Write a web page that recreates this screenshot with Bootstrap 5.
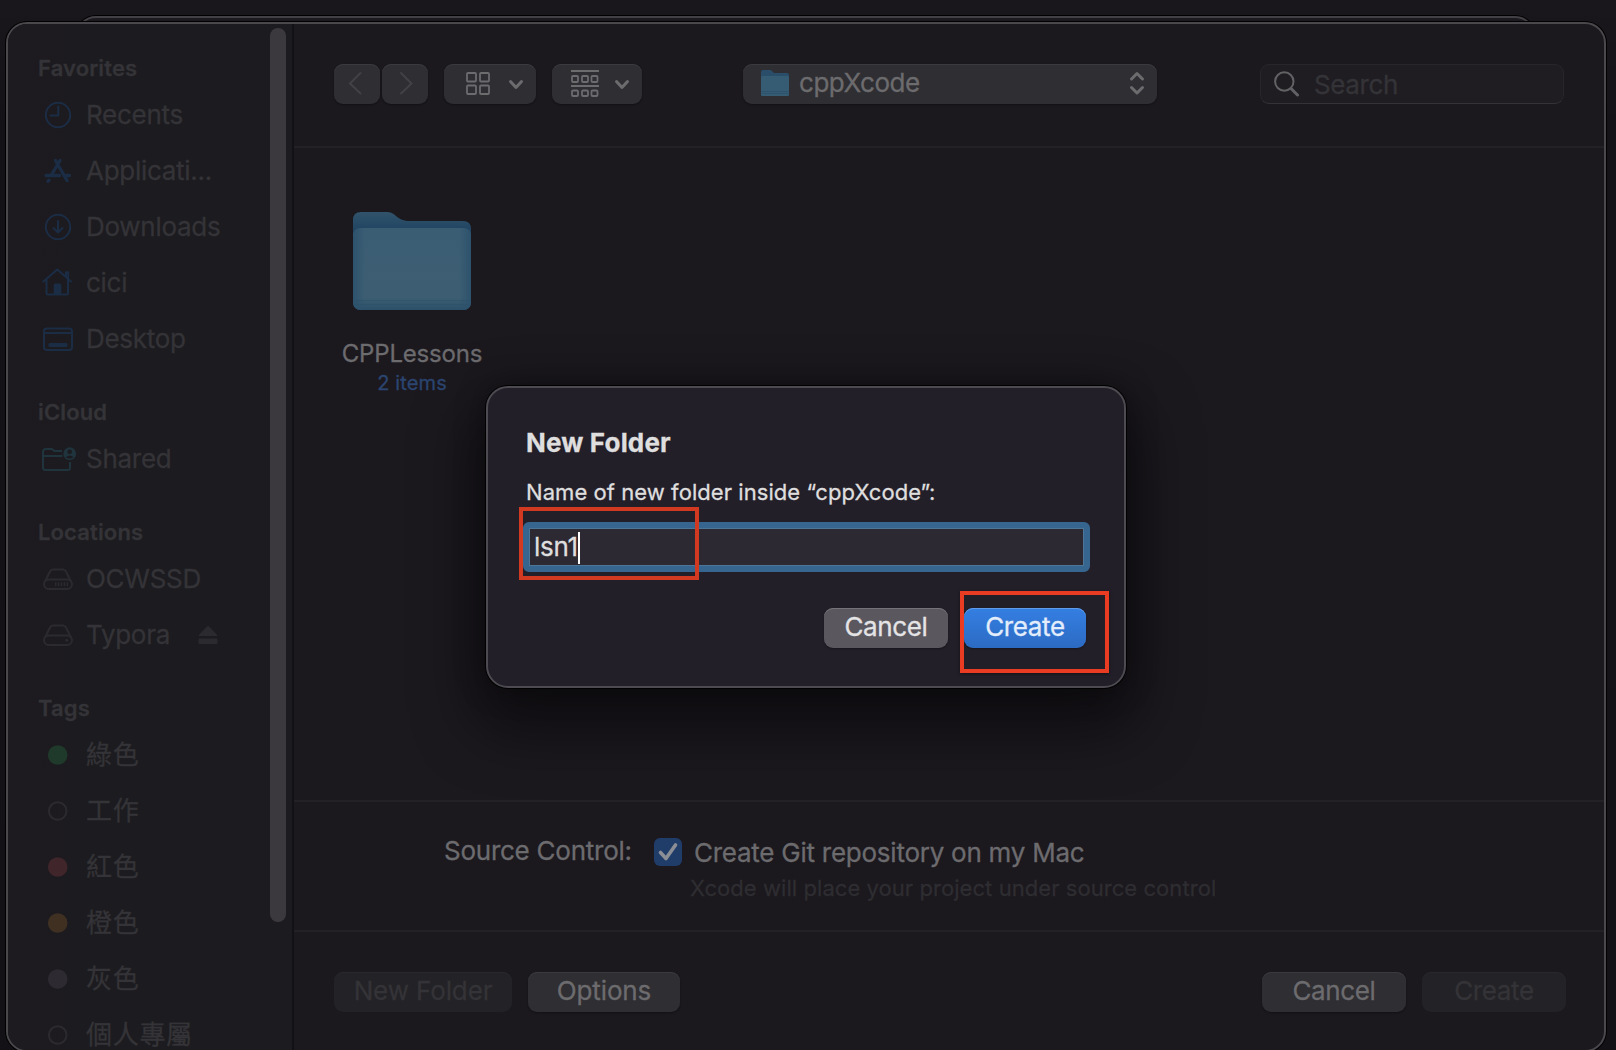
<!DOCTYPE html>
<html lang="en">
<head>
<meta charset="utf-8">
<meta name="viewport" content="width=device-width, initial-scale=1">
<title>New Folder</title>
<link href="https://cdn.jsdelivr.net/npm/bootstrap@5.3.0/dist/css/bootstrap.min.css" rel="stylesheet">
<style>
body{margin:0;width:1616px;height:1050px;overflow:hidden;background:linear-gradient(180deg,#19171c 0,#141217 120px,#131116 100%);font-family:Inter,"Noto Sans CJK TC",sans-serif;font-size:26px;line-height:30px;color:#6c6b6e;-webkit-text-stroke:.3px currentColor;letter-spacing:-.25px}
svg{display:block;flex:none}
.desk{width:1616px;height:1050px;overflow:hidden}
.backwin{left:76px;top:16px;width:1459px;height:60px;border:2px solid #424045;border-radius:20px;background:#1b191e;box-shadow:0 0 0 1px #000}
.win{left:6px;top:22px;width:1600px;height:1030px;border:2px solid #4a484c;border-radius:21px;background:#1b181e;box-shadow:0 0 0 1px #000}
.side{width:284px;background:linear-gradient(90deg,#1d1a20 0,#1c1b1f 25%,#1c1b1f 100%);color:#343337}
.divide{width:2px;background:#121116}
.side-in{padding:25px 0 0 30px}
.hd{height:38px;font-size:22px;font-weight:600;line-height:38px;letter-spacing:.14px}
.grp{margin-bottom:26px}
.it{height:56px;white-space:nowrap;letter-spacing:-.28px}
.ic{width:36px;margin-right:12px}
.zh{letter-spacing:.7px}
.blue{color:#1b2c45}
.teal{color:#1f343d}
.gray{color:#2b2a2f}
.eject{margin-left:28px}
.thumb{left:262px;top:4px;width:16px;height:894px;border-radius:8px;background:#3b393e}
.bar{height:122px;padding:40px 40px 0 40px}
.line{height:2px;background:#232126;flex:none}
.ctl{height:40px;border-radius:9px;background:#2f2e32;box-shadow:inset 0 1px 0 #3b3a3e,0 1px 2px rgba(0,0,0,.3);color:#6c6b6e;border:0;padding:0 0 2px;font-size:26px;line-height:38px;text-align:center;white-space:nowrap;flex:none;letter-spacing:-.36px}
.ctl.off{background:#232226;color:#343337;box-shadow:inset 0 1px 0 #29282c}
.ctl.wide{letter-spacing:-.12px}
.w46{width:46px}.w90{width:90px}.w92{width:92px}.w122{width:122px}.w124{width:124px}.w144{width:144px}.w152{width:152px}.w178{width:178px}
.gap-s{margin-left:2px}.gap-m{margin-left:16px}
.pop{width:414px;margin-left:101px;padding-left:17px;padding-right:12px;letter-spacing:-.47px}
.pop span{margin-left:9px}
.find{width:304px;height:40px;border-radius:9px;background:#1f1d22;border:1px solid #28262b;border-bottom:1px solid #343237;margin-left:103px;color:#343337;padding-left:13px;letter-spacing:-.38px}
.find span{margin-left:14px;padding-top:2px}
.files{height:652px;padding:64px 0 0 44px}
.tile{width:148px}
.nm{font-size:24px;margin-top:28px;letter-spacing:-.18px}
.sub{font-size:20px;color:#2b4570;line-height:28px;letter-spacing:.13px}
.src{height:128px;padding:34px 0 0 150px}
.lab{width:187px;margin-right:23px}
.gitrow{margin-top:2px}
.gitrow span{margin-left:12px}
.hint{font-size:22px;color:#2e2d31;margin-top:5px;margin-left:36px;line-height:30px;letter-spacing:.06px}
.foot{padding:40px 38px 0 40px}
.dlg{left:486px;top:386px;width:640px;height:302px;border:2px solid #4d4b51;border-radius:22px;background:#231f29;box-shadow:0 0 0 1px #000,0 30px 60px 10px rgba(0,0,0,.5),0 0 30px rgba(0,0,0,.35);color:#dfdedf;padding:40px 34px 0 35px}
.ttl{font-weight:700;margin-left:3px;line-height:30px;letter-spacing:.16px}
.msg{font-size:22px;margin-left:3px;margin-top:19px;line-height:30px;letter-spacing:.06px}
.fld{height:50px;width:567px;border:6px solid #36658f;border-radius:6px;background:#2d2932;margin-top:15px;padding-left:5px;box-shadow:inset 0 0 0 1px #4c7598}
.caret{width:2px;height:32px;background:#fff;margin-top:1px}
.acts{margin-top:36px;gap:16px;padding-right:4px}
.dlg .ctl{background:#5a575e;color:#e4e3e5;box-shadow:inset 0 1px 0 #767379,0 1px 2px rgba(0,0,0,.35)}
.dlg .ctl.go{background:linear-gradient(#347fe2,#2c6bc3);color:#e3edfb;box-shadow:inset 0 1px 0 #5f9ceb,0 1px 2px rgba(0,0,0,.35)}
.redbox{border:4px solid #d13a20}
.r1{left:519px;top:507px;width:180px;height:73px}
.r2{left:960px;top:591px;width:149px;height:82px;border-color:#e93c22;box-shadow:0 1px 3px rgba(0,0,0,.5)}
</style>
<script src="https://cdn.jsdelivr.net/npm/bootstrap@5.3.0/dist/js/bootstrap.bundle.min.js"></script>
</head>
<body>
<div class="desk position-relative">
<div class="backwin position-absolute"></div>
<div class="win position-absolute d-flex overflow-hidden">
  <aside class="side position-relative flex-shrink-0">
    <div class="side-in">
      <div class="grp">
        <div class="hd">Favorites</div>
        <div class="it d-flex align-items-center"><span class="ic blue"><svg width="36" height="36" viewBox="0 0 36 36" fill="none" stroke="currentColor" stroke-width="2"><circle cx="20" cy="18" r="12.2"/><path d="M20.3 9.5v9H12.5" stroke-linecap="round"/></svg></span><span>Recents</span></div>
        <div class="it d-flex align-items-center"><span class="ic blue"><svg width="36" height="36" viewBox="0 0 36 36" fill="none" stroke="currentColor" stroke-width="3.4" stroke-linecap="round"><path d="M17.5 7.5l2 3.5M22 7.5L13.7 21.5M8 22.5h13.5M28.500 22.5h3M21 13.500L29 27.500M11 27.300l-1 1"/></svg></span><span>Applicati...</span></div>
        <div class="it d-flex align-items-center"><span class="ic blue"><svg width="36" height="36" viewBox="0 0 36 36" fill="none" stroke="currentColor" stroke-width="2" stroke-linecap="round" stroke-linejoin="round"><circle cx="20" cy="18" r="12.2"/><path d="M20 12v11.500M15.500 19l4.500 4.500 4.500-4.500"/></svg></span><span>Downloads</span></div>
        <div class="it d-flex align-items-center"><span class="ic blue"><svg width="36" height="36" viewBox="0 0 36 36" fill="none" stroke="currentColor" stroke-width="2" stroke-linecap="round" stroke-linejoin="round"><path d="M5.300 16.500L19.300 4.500l13.700 12M8.500 15v13q0 1.500 1.500 1.500h18.500q1.500 0 1.500-1.500V15M28 11V7.200h2.200v6"/><path d="M15.700 29.500v-9.500q0-1.500 1.500-1.500h4.600q1.500 0 1.500 1.500v9.500z" fill="currentColor" stroke="none"/></svg></span><span>cici</span></div>
        <div class="it d-flex align-items-center"><span class="ic blue"><svg width="36" height="36" viewBox="0 0 36 36" fill="none" stroke="currentColor" stroke-width="2"><rect x="6" y="7.500" width="28" height="21.500" rx="2.800"/><path d="M6 12h28"/><rect x="10.500" y="22" width="19" height="4" rx="1.200" fill="currentColor" stroke="none"/></svg></span><span>Desktop</span></div>
      </div>
      <div class="grp">
        <div class="hd">iCloud</div>
        <div class="it d-flex align-items-center"><span class="ic teal"><svg width="40" height="36" viewBox="0 0 40 36" fill="none" stroke="currentColor" stroke-width="2"><path d="M24 10H16.500l-2.700-2H8q-3 0-3 3v15.500q0 2.500 2.500 2.500h22q2.500 0 2.500-2.500V21M5 15h19.500"/><circle cx="31.700" cy="12.700" r="6.400" fill="currentColor" stroke="none"/><circle cx="31.700" cy="10.800" r="2.300" fill="#1c1b1f" stroke="none"/><path d="M27.800 16.300q3.900-3.800 7.800 0q-3.900 2.600-7.800 0z" fill="#1c1b1f" stroke="none"/></svg></span><span>Shared</span></div>
      </div>
      <div class="grp">
        <div class="hd">Locations</div>
        <div class="it d-flex align-items-center"><span class="ic gray"><svg width="36" height="36" viewBox="0 0 36 36" fill="none" stroke="currentColor" stroke-width="2"><rect x="6" y="18.500" width="28" height="9.500" rx="4.750"/><path d="M6.800 21L12 10.500q1-2 3-2h10q2 0 3 2L33.200 21"/><path d="M17 23.300h13.500" stroke-width="4" stroke-dasharray="1.500 1.400"/></svg></span><span>OCWSSD</span></div>
        <div class="it d-flex align-items-center"><span class="ic gray"><svg width="36" height="36" viewBox="0 0 36 36" fill="none" stroke="currentColor" stroke-width="2"><rect x="6" y="18.500" width="28" height="9.500" rx="4.750"/><path d="M6.800 21L12 10.500q1-2 3-2h10q2 0 3 2L33.200 21"/><circle cx="28.700" cy="23.300" r="1.500" fill="currentColor" stroke="none"/></svg></span><span>Typora</span><svg class="gray eject" width="20" height="20" viewBox="0 0 20 20" fill="currentColor"><path d="M9 1.500q1-1.200 2 0l8.300 8.500q.5 1-.7 1H1.400q-1.200 0-.7-1z"/><rect x=".500" y="13.500" width="19" height="5.500" rx="1.200"/></svg></div>
      </div>
      <div class="grp">
        <div class="hd">Tags</div>
        <div class="it d-flex align-items-center"><span class="ic"><svg width="36" height="36"><circle cx="19.700" cy="18" r="9.800" fill="#1f3a2a"/></svg></span><span class="zh">綠色</span></div>
        <div class="it d-flex align-items-center"><span class="ic gray"><svg width="36" height="36"><circle cx="19.700" cy="18" r="8.800" fill="none" stroke="currentColor" stroke-width="2"/></svg></span><span class="zh">工作</span></div>
        <div class="it d-flex align-items-center"><span class="ic"><svg width="36" height="36"><circle cx="19.700" cy="18" r="9.800" fill="#40252a"/></svg></span><span class="zh">紅色</span></div>
        <div class="it d-flex align-items-center"><span class="ic"><svg width="36" height="36"><circle cx="19.700" cy="18" r="9.800" fill="#3f3022"/></svg></span><span class="zh">橙色</span></div>
        <div class="it d-flex align-items-center"><span class="ic"><svg width="36" height="36"><circle cx="19.700" cy="18" r="9.800" fill="#2d2b31"/></svg></span><span class="zh">灰色</span></div>
        <div class="it d-flex align-items-center"><span class="ic gray"><svg width="36" height="36"><circle cx="19.700" cy="18" r="8.800" fill="none" stroke="currentColor" stroke-width="2"/></svg></span><span class="zh">個人專屬</span></div>
      </div>
    </div>
    <div class="thumb position-absolute"></div>
  </aside>
  <div class="divide flex-shrink-0"></div>
  <main class="flex-grow-1 d-flex flex-column">
    <div class="bar d-flex">
      <div class="ctl w46"><svg width="46" height="40" viewBox="0 0 46 40" fill="none" stroke="#424145" stroke-width="2" stroke-linecap="round"><path d="M26.500 9L16 19.500l10.500 10"/></svg></div>
      <div class="ctl w46 gap-s"><svg width="46" height="40" viewBox="0 0 46 40" fill="none" stroke="#424145" stroke-width="2" stroke-linecap="round"><path d="M19 9l10.500 10.500L19 29.500"/></svg></div>
      <div class="ctl w92 gap-m"><svg width="92" height="40" viewBox="0 0 92 40" fill="none" stroke="#6c6b6e" stroke-width="1.800"><rect x="23" y="9" width="9" height="8.500" rx="1"/><rect x="36" y="9" width="9" height="8.500" rx="1"/><rect x="23" y="21.500" width="9" height="8.500" rx="1"/><rect x="36" y="21.500" width="9" height="8.500" rx="1"/><path d="M66.500 17.500l5.500 6 5.500-6" stroke-width="3" stroke-linecap="round" stroke-linejoin="round"/></svg></div>
      <div class="ctl w90 gap-m"><svg width="90" height="40" viewBox="0 0 90 40" fill="none" stroke="#6c6b6e" stroke-width="1.800"><path d="M19 7h28M19 22h28"/><rect x="20" y="12" width="6" height="6" rx="1"/><rect x="30" y="12" width="6" height="6" rx="1"/><rect x="39.500" y="12" width="6" height="6" rx="1"/><rect x="20" y="26.500" width="6" height="5.500" rx="1"/><rect x="30" y="26.500" width="6" height="5.500" rx="1"/><rect x="39.500" y="26.500" width="6" height="5.500" rx="1"/><path d="M64.500 17.500l5.500 6 5.500-6" stroke-width="3" stroke-linecap="round" stroke-linejoin="round"/></svg></div>
      <div class="ctl pop d-flex align-items-center"><svg width="30" height="28" viewBox="0 0 30 28"><path d="M1 3q0-2 2-2h7q1.500 0 2.500 1.500T15 4h12q2 0 2 2v19q0 2-2 2H3q-2 0-2-2z" fill="#2a4e69"/><rect x="1" y="7" width="28" height="20" rx="1.500" fill="#365c74"/><path d="M1.500 22.500h27M1.500 24.500h27" stroke="#2c526d"/></svg><span>cppXcode</span><svg class="ms-auto" width="16" height="26" viewBox="0 0 16 26" fill="none" stroke="#6c6b6e" stroke-width="3" stroke-linecap="round" stroke-linejoin="round"><path d="M2.500 9L8 3.500 13.500 9M2.500 17.500L8 23l5.500-5.500"/></svg></div>
      <div class="find d-flex align-items-center"><svg width="26" height="26" viewBox="0 0 26 26" fill="none" stroke="#626164" stroke-linecap="round"><circle cx="10.300" cy="10.500" r="9.200" stroke-width="2"/><path d="M17.500 18l6 6" stroke-width="3"/></svg><span>Search</span></div>
    </div>
    <div class="line"></div>
    <div class="files">
      <div class="tile text-center">
        <svg class="mx-auto" width="118" height="99" viewBox="0 0 118 99">
          <defs><linearGradient id="bk" x1="0" y1="0" x2="0" y2="1"><stop offset="0" stop-color="#31536b"/><stop offset=".17" stop-color="#224663"/><stop offset="1" stop-color="#2b4f68"/></linearGradient>
          <linearGradient id="fr" x1="0" y1="0" x2="0" y2="1"><stop offset="0" stop-color="#3b5d74"/><stop offset=".85" stop-color="#3d5e72"/><stop offset="1" stop-color="#2b5069"/></linearGradient>
          <linearGradient id="sd" x1="0" y1="0" x2="1" y2="0"><stop offset="0" stop-color="#2d526c"/><stop offset=".1" stop-color="#2d526c" stop-opacity="0"/><stop offset=".9" stop-color="#2d526c" stop-opacity="0"/><stop offset="1" stop-color="#2d526c"/></linearGradient></defs>
          <path d="M0 8Q0 0 8 0H34Q39 0 43 4T54 9H110Q118 9 118 17V90Q118 98 110 98H8Q0 98 0 90z" fill="url(#bk)"/>
          <rect x="0" y="16" width="118" height="82" rx="8" fill="url(#fr)"/><rect x="0" y="16" width="118" height="82" rx="8" fill="url(#sd)"/>
          <path d="M1 88.500h116M1 92.500h116" stroke="#2b5069" stroke-opacity=".45"/>
        </svg>
        <div class="nm">CPPLessons</div>
        <div class="sub">2 items</div>
      </div>
    </div>
    <div class="line"></div>
    <div class="src">
      <div class="d-flex">
        <span class="lab text-nowrap">Source Control:</span>
        <div>
          <div class="gitrow d-flex"><svg width="28" height="28" viewBox="0 0 28 28"><rect width="28" height="28" rx="6" fill="#203c69"/><path d="M6.500 14.500l5.500 6L21.500 7" fill="none" stroke="#8b8e95" stroke-width="3.600" stroke-linecap="round" stroke-linejoin="round"/></svg><span>Create Git repository on my Mac</span></div>
          <div class="hint">Xcode will place your project under source control</div>
        </div>
      </div>
    </div>
    <div class="line"></div>
    <div class="foot d-flex">
      <button class="ctl off wide w178">New Folder</button>
      <button class="ctl wide w152 gap-m">Options</button>
      <button class="ctl w144 ms-auto">Cancel</button>
      <button class="ctl off w144 gap-m">Create</button>
    </div>
  </main>
</div>
<div class="dlg position-absolute">
  <div class="ttl">New Folder</div>
  <div class="msg">Name of new folder inside “cppXcode”:</div>
  <div class="fld d-flex align-items-center"><span>lsn1</span><span class="caret"></span></div>
  <div class="acts d-flex justify-content-end"><button class="ctl w124">Cancel</button><button class="ctl go w122">Create</button></div>
</div>
<div class="redbox r1 position-absolute"></div>
<div class="redbox r2 position-absolute"></div>
</div>
</body>
</html>
